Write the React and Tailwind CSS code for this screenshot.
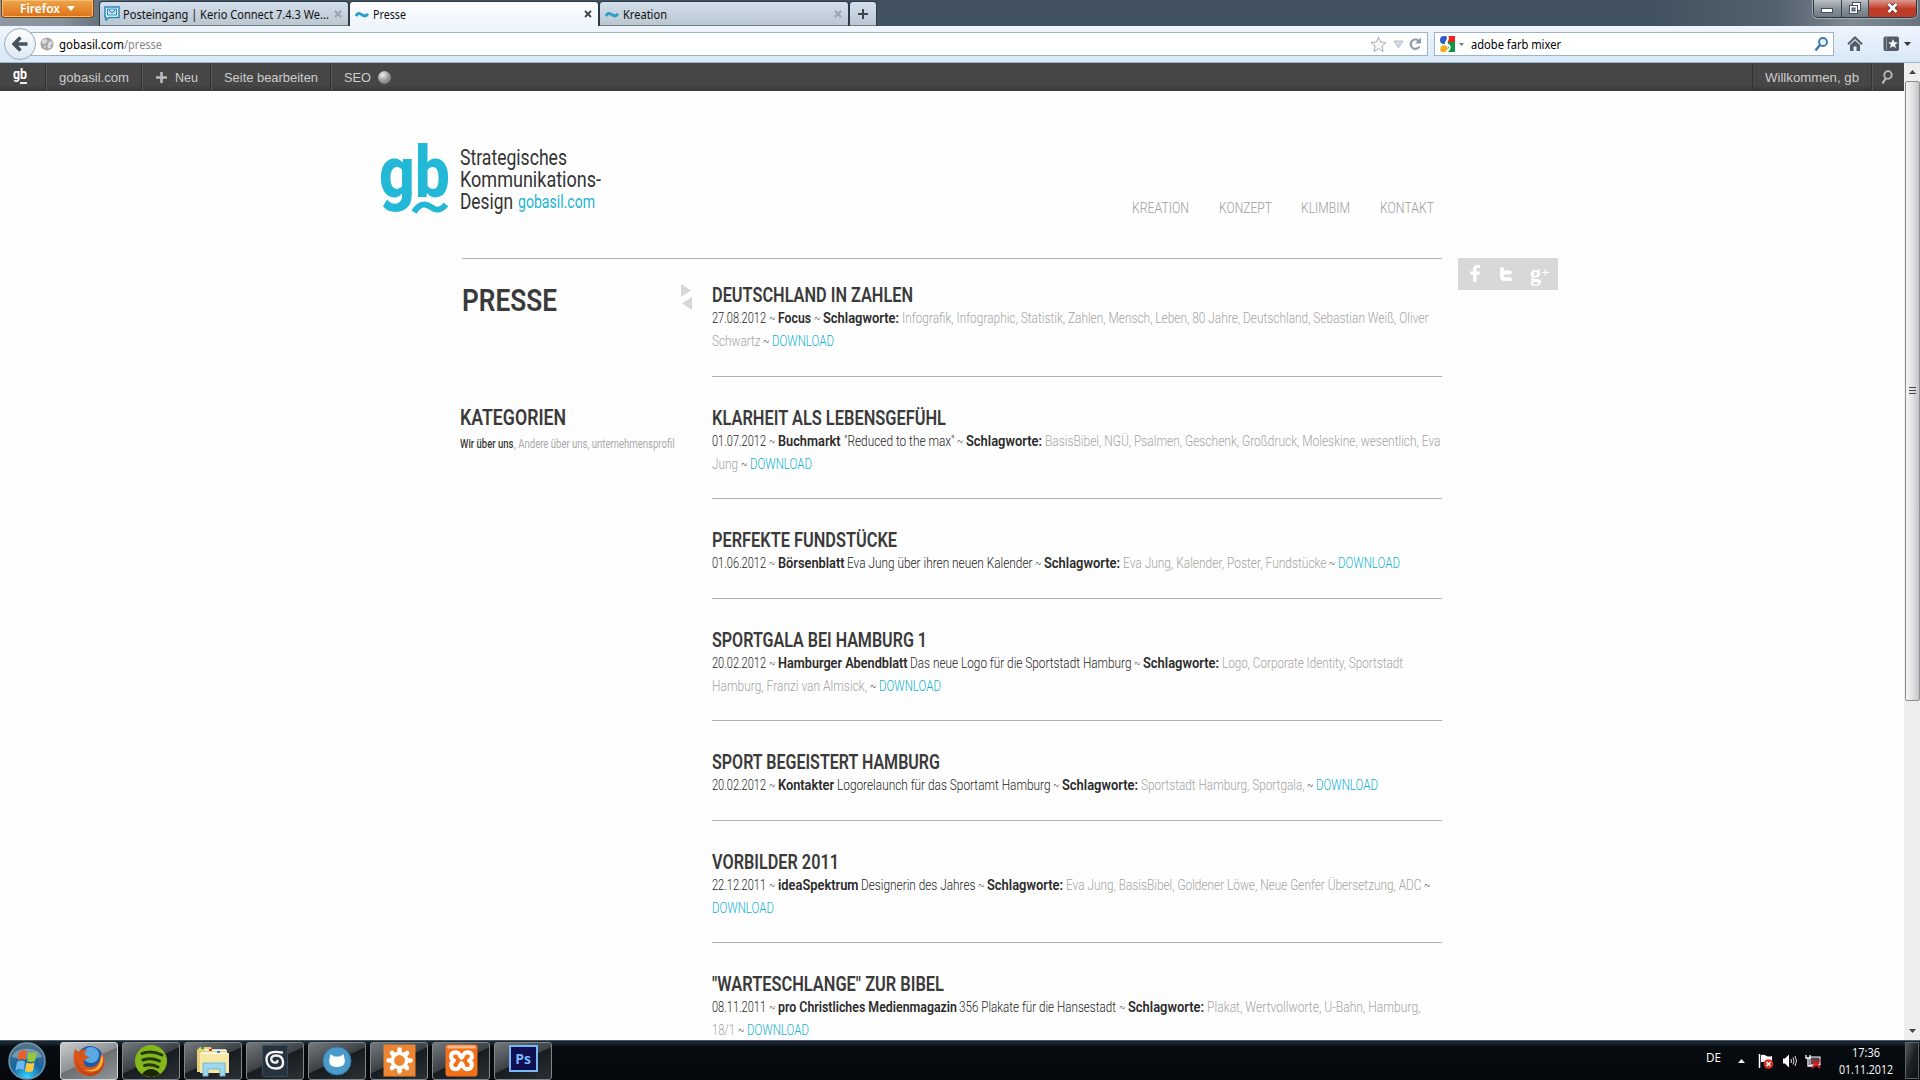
import React, { useLayoutEffect, useRef } from "react";

/* Text set to an exact measure: the glyphs are condensed to fill the width. */
function Fit({ w, className = "", children }) {
  const ref = useRef(null);
  useLayoutEffect(() => {
    const el = ref.current;
    const fit = () => {
      el.style.transform = "none";
      const natural = el.getBoundingClientRect().width;
      if (natural) el.style.transform = `scaleX(${w / natural})`;
    };
    fit();
    document.fonts?.ready.then(fit);
  }, [w]);
  return (
    <span className={`block shrink-0 whitespace-pre ${className}`} style={{ width: w }}>
      <span ref={ref} className="inline-block origin-left whitespace-pre">{children}</span>
    </span>
  );
}

const INK = {
  d: "font-light text-[#222]",
  t: "font-light text-[#555]",
  b: "font-semibold text-[#2b2b2b]",
  g: "font-light text-[#a3a3a3]",
  c: "font-light text-[#0fb0d0]",
};

/* One line of runs: [ink, text, start, end], measured from the line's origin. */
function Line({ runs, origin }) {
  let pos = origin;
  return (
    <div className="flex h-[23px] text-[15px] leading-[23px]">
      {runs.map(([ink, text, start, end], i) => {
        const gap = start - pos;
        pos = end;
        return (
          <span key={i} className="block shrink-0" style={{ marginLeft: gap }}>
            <Fit w={end - start} className={INK[ink]}>{text}</Fit>
          </span>
        );
      })}
    </div>
  );
}

const ITEMS = [
  {
    title: "DEUTSCHLAND IN ZAHLEN", tw: 201, box: "h-[118px] pt-[25px]",
    lines: [
      [["d", "27.08.2012", 712, 766], ["t", "~", 769, 775.5], ["b", "Focus", 778, 811], ["t", "~", 813.5, 820], ["b", "Schlagworte:", 823, 899],
        ["g", "Infografik, Infographic, Statistik, Zahlen, Mensch, Leben, 80 Jahre, Deutschland, Sebastian Weiß, Oliver", 901.5, 1428]],
      [["g", "Schwartz", 712, 760.5], ["t", "~", 763, 769.5], ["c", "DOWNLOAD", 772, 834]],
    ],
  },
  {
    title: "KLARHEIT ALS LEBENSGEFÜHL", tw: 234, box: "h-[122px] pt-[30px]",
    lines: [
      [["d", "01.07.2012", 712, 766], ["t", "~", 769, 775.5], ["b", "Buchmarkt", 778, 840.5], ["d", "\"Reduced to the max\"", 843.5, 954], ["t", "~", 956.5, 963], ["b", "Schlagworte:", 966, 1042],
        ["g", "BasisBibel, NGÜ, Psalmen, Geschenk, Großdruck, Moleskine, wesentlich, Eva", 1045, 1440.5]],
      [["g", "Jung", 712, 738], ["t", "~", 741, 747.5], ["c", "DOWNLOAD", 750, 812]],
    ],
  },
  {
    title: "PERFEKTE FUNDSTÜCKE", tw: 185, box: "h-[100px] pt-[30px]",
    lines: [
      [["d", "01.06.2012", 712, 766], ["t", "~", 769, 775.5], ["b", "Börsenblatt", 778, 844.5], ["d", "Eva Jung über ihren neuen Kalender", 847, 1032.5], ["t", "~", 1035, 1041.5], ["b", "Schlagworte:", 1044, 1120],
        ["g", "Eva Jung, Kalender, Poster, Fundstücke", 1123, 1326.5], ["t", "~", 1329, 1335.5], ["c", "DOWNLOAD", 1338, 1400]],
    ],
  },
  {
    title: "SPORTGALA BEI HAMBURG 1", tw: 215, box: "h-[122px] pt-[30px]",
    lines: [
      [["d", "20.02.2012", 712, 766], ["t", "~", 769, 775.5], ["b", "Hamburger Abendblatt", 778, 907.5], ["d", "Das neue Logo für die Sportstadt Hamburg", 910, 1131.5], ["t", "~", 1134, 1140.5], ["b", "Schlagworte:", 1143, 1219],
        ["g", "Logo, Corporate Identity, Sportstadt", 1222, 1403]],
      [["g", "Hamburg, Franzi van Almsick,", 712, 867], ["t", "~", 869.5, 876], ["c", "DOWNLOAD", 879, 941]],
    ],
  },
  {
    title: "SPORT BEGEISTERT HAMBURG", tw: 228, box: "h-[100px] pt-[30px]",
    lines: [
      [["d", "20.02.2012", 712, 766], ["t", "~", 769, 775.5], ["b", "Kontakter", 778, 834], ["d", "Logorelaunch für das Sportamt Hamburg", 837, 1050.5], ["t", "~", 1053, 1059.5], ["b", "Schlagworte:", 1062, 1138],
        ["g", "Sportstadt Hamburg, Sportgala,", 1141, 1304.5], ["t", "~", 1307, 1313.5], ["c", "DOWNLOAD", 1316, 1378]],
    ],
  },
  {
    title: "VORBILDER 2011", tw: 127, box: "h-[122px] pt-[30px]",
    lines: [
      [["d", "22.12.2011", 712, 766], ["t", "~", 769, 775.5], ["b", "ideaSpektrum", 778, 858.5], ["d", "Designerin des Jahres", 861, 975.5], ["t", "~", 978, 984.5], ["b", "Schlagworte:", 987, 1063],
        ["g", "Eva Jung, BasisBibel, Goldener Löwe, Neue Genfer Übersetzung, ADC", 1065.5, 1421], ["t", "~", 1423.5, 1430]],
      [["c", "DOWNLOAD", 712, 774]],
    ],
  },
  {
    title: "\"WARTESCHLANGE\" ZUR BIBEL", tw: 232, box: "h-[122px] pt-[30px]",
    lines: [
      [["d", "08.11.2011", 712, 766], ["t", "~", 769, 775.5], ["b", "pro Christliches Medienmagazin", 778, 957], ["d", "356 Plakate für die Hansestadt", 959, 1116], ["t", "~", 1118.5, 1125], ["b", "Schlagworte:", 1128, 1204],
        ["g", "Plakat, Wertvollworte, U-Bahn, Hamburg,", 1206.5, 1420]],
      [["g", "18/1", 712, 735], ["t", "~", 737.5, 744], ["c", "DOWNLOAD", 747, 809]],
    ],
  },
];

function Wave() {
  return (
    <svg width="14" height="14" viewBox="0 0 14 14" className="shrink-0">
      <path d="M1 8C2.5 5 4.5 5 7 6.8C9.5 8.5 11.5 8 13 5.8" fill="none" stroke="#2f9fcb" strokeWidth="3" />
    </svg>
  );
}

function CloseX({ color }) {
  return (
    <svg width="8" height="8" viewBox="0 0 8 8" className="shrink-0">
      <path d="M1 1L7 7M7 1L1 7" stroke={color} strokeWidth="1.8" />
    </svg>
  );
}

const TAB = "flex h-[24px] items-center rounded-t-[3px] border-b border-[#6f7d86] bg-linear-to-b from-[#d3dfeb] to-[#bac6d0] shadow-[0_0_0_1px_#2c3946]";

function TitleBar() {
  return (
    <div className="flex h-[26px] items-start bg-[linear-gradient(90deg,#8d98a2_0px,#88929b_60px,#566573_115px,#42515f_200px,#42515f_1650px,#54626f_1780px,#7f8a93_1850px,#67747f_1920px)]">
      <div className="ml-px flex h-[18px] w-[93px] items-center rounded-b-[4px] border border-t-0 border-[#7d4412] bg-linear-to-b from-[#eda548] to-[#db7114] pl-[18px] shadow-[inset_0_0_0_1px_#f5bd77]">
        <Fit w={40} className="text-[12px] leading-[16px] font-semibold text-white">Firefox</Fit>
        <svg width="8" height="5" viewBox="0 0 8 5" className="ml-[7px]"><path d="M0 0H8L4 5Z" fill="#fff" /></svg>
      </div>
      <div className="mt-[2px] ml-[6px] flex gap-[2px] text-[12px] leading-[20px] text-[#111]">
        <div className={`${TAB} w-[248px] pl-[4px]`}>
          <svg width="16" height="15" viewBox="0 0 16 15" className="shrink-0">
            <path d="M1 1H15V11.500H5L2 14V11.500H1Z" fill="#fff" stroke="#2588bd" strokeWidth="1.500" />
            <rect x="3.500" y="3" width="9" height="6" fill="#bfe4f5" stroke="#2588bd" />
            <path d="M5 4L8 7L11 4" fill="none" stroke="#1571a8" />
          </svg>
          <Fit w={206} className="mt-[2px] ml-[3px]">Posteingang | Kerio Connect 7.4.3 We...</Fit>
          <div className="ml-[5px]"><CloseX color="#98a2aa" /></div>
        </div>
        <div className="flex h-[24px] w-[248px] items-center rounded-t-[3px] bg-linear-to-b from-[#fdfeff] to-[#eff5fc] pl-[5px] shadow-[0_0_0_1px_#2c3946] [clip-path:inset(-1px_-1px_0_-1px)]">
          <div className="mt-[2px]"><Wave /></div>
          <Fit w={33} className="mt-[2px] ml-[4px]">Presse</Fit>
          <div className="mr-[6px] ml-auto"><CloseX color="#3f474d" /></div>
        </div>
        <div className={`${TAB} w-[248px] pl-[5px]`}>
          <div className="mt-[2px]"><Wave /></div>
          <Fit w={44} className="mt-[2px] ml-[4px]">Kreation</Fit>
          <div className="mr-[6px] ml-auto"><CloseX color="#98a2aa" /></div>
        </div>
        <div className={`${TAB} w-[26px] justify-center`}>
          <svg width="10" height="10" viewBox="0 0 10 10"><path d="M5 0V10M0 5H10" stroke="#3d464e" strokeWidth="2" /></svg>
        </div>
      </div>
      <div className="mr-[3px] ml-auto flex h-[18px] w-[104px] overflow-hidden rounded-b-[5px] border border-t-0 border-[#2c343b] shadow-[0_0_0_1px_#a3adb4]">
        <div className="flex w-[28px] items-center justify-center border-r border-[#3a444d] bg-linear-to-b from-[#b9c0c6] via-[#8b949b] via-50% to-[#6f7a82]">
          <svg width="13" height="6" viewBox="0 0 13 6" className="mt-[5px]"><rect x=".5" y=".5" width="11" height="4" fill="#fff" stroke="#434c60" /></svg>
        </div>
        <div className="flex w-[27px] items-center justify-center border-r border-[#3a444d] bg-linear-to-b from-[#b9c0c6] via-[#8b949b] via-50% to-[#6f7a82]">
          <svg width="12" height="12" viewBox="0 0 12 12" className="-mt-px">
            <rect x="3.500" y=".5" width="8" height="8" fill="#fff" stroke="#434c60" />
            <rect x=".5" y="3.500" width="8" height="8" fill="#fff" stroke="#434c60" />
            <rect x="3" y="6" width="3" height="3" fill="#8b949b" stroke="#434c60" />
          </svg>
        </div>
        <div className="flex flex-1 items-center justify-center bg-linear-to-b from-[#d99a8f] via-[#c13c26] via-50% to-[#b8402b]">
          <svg width="13" height="12" viewBox="0 0 13 12" className="-mt-px">
            <path d="M2.500 2L10.500 10M10.500 2L2.500 10" stroke="#5a3a44" strokeWidth="4.400" />
            <path d="M2.500 2L10.500 10M10.500 2L2.500 10" stroke="#fff" strokeWidth="2.600" />
          </svg>
        </div>
      </div>
    </div>
  );
}

function Toolbar() {
  return (
    <div className="flex h-[37px] items-center border-b border-[#9db5cd] bg-linear-to-b from-[#eff5fc] to-[#d8e8f7] text-[12px] leading-[20px]">
      <div className="z-10 ml-[4px] flex h-[32px] w-[32px] shrink-0 items-center justify-center rounded-full border border-[#93a8bd] bg-linear-to-b from-[#fdfeff] to-[#dde8f4]">
        <svg width="16" height="16" viewBox="0 0 16 16"><path d="M8.500 1.500L2 8L8.500 14.500M2.500 8H15.500" fill="none" stroke="#47535f" strokeWidth="3.400" /></svg>
      </div>
      <div className="-ml-[6px] flex h-[24px] w-[1398px] items-center border border-[#9fb3c8] bg-white pl-[9px]">
        <svg width="14" height="14" viewBox="0 0 15 15" className="shrink-0">
          <circle cx="7.500" cy="7.500" r="7" fill="#a8a8a8" />
          <path d="M2 4L6 2L8 4L6 7L3 7.500ZM9 6L12 4L13.500 7L11 9L12 11L9 12.500L8 9ZM4 9L6.500 10L5.500 12.500Z" fill="#dedede" />
        </svg>
        <Fit w={65} className="mt-[2px] ml-[5px] text-black">gobasil.com</Fit>
        <Fit w={38} className="mt-[2px] text-[#888]">/presse</Fit>
        <div className="mr-[5px] ml-auto flex items-center">
          <svg width="17" height="17" viewBox="0 0 17 17"><path d="M8.500 1L10.700 6L16 6.500L12 10L13.200 15.500L8.500 12.600L3.800 15.500L5 10L1 6.500L6.300 6Z" fill="#f7f7f7" stroke="#aaa" /></svg>
          <svg width="11" height="9" viewBox="0 0 11 9" className="ml-[6px]"><path d="M1 1H10L5.500 8Z" fill="#d5dbe2" stroke="#b6bec7" /></svg>
          <svg width="13" height="14" viewBox="0 0 13 14" className="ml-[5px]"><path d="M10.500 9.500A4.700 4.700 0 1 1 9.700 3.800" fill="none" stroke="#8e9cab" strokeWidth="2.200" /><path d="M12 .5V6.500H6Z" fill="#8e9cab" /></svg>
        </div>
      </div>
      <div className="ml-[6px] flex h-[24px] w-[400px] items-center border border-[#9fb3c8] bg-white pl-[4px]">
        <svg width="16" height="16" viewBox="0 0 16 16" className="shrink-0">
          <rect width="16" height="16" fill="#fff" />
          <rect x="7" width="9" height="6" fill="#e8261d" /><rect x="9" y="6" width="7" height="10" fill="#119646" />
          <circle cx="5" cy="4" r="4" fill="#2a5cc4" /><circle cx="5" cy="13" r="3.800" fill="#f2b01e" />
          <path d="M8 0C12 4 3 7 9 9C13 11 9 15 7 16" fill="none" stroke="#fff" strokeWidth="2" />
        </svg>
        <svg width="5" height="3" viewBox="0 0 5 3" className="ml-[4px]"><path d="M0 0H5L2.500 3Z" fill="#777" /></svg>
        <Fit w={90} className="mt-[2px] ml-[7px] text-black">adobe farb mixer</Fit>
        <svg width="14" height="15" viewBox="0 0 14 15" className="mr-[5px] ml-auto"><circle cx="9" cy="5" r="4" fill="#e9f3fb" stroke="#3b76b4" strokeWidth="1.800" /><path d="M6 8L1.500 13.500" stroke="#3b76b4" strokeWidth="2.400" /></svg>
      </div>
      <svg width="16" height="16" viewBox="0 0 16 16" className="ml-[13px]"><path d="M1 8.200L8 1.500L15 8.200" fill="none" stroke="#515c67" strokeWidth="2" /><path d="M3 9L8 4.500L13 9V15H9.500V10.500H6.500V15H3Z" fill="#515c67" /></svg>
      <svg width="17" height="16" viewBox="0 0 17 16" className="ml-[20px]"><rect x=".5" y=".5" width="15.500" height="14.500" rx="2" fill="#515c67" /><path d="M3.500 1V14" stroke="#8c959d" /><path d="M10 3L11.300 6.300L14.800 6.500L12 8.700L13 12L10 10.200L7 12L8 8.700L5.200 6.500L8.700 6.300Z" fill="#fff" /></svg>
      <svg width="7" height="4" viewBox="0 0 7 4" className="ml-[4px]"><path d="M0 0H7L3.500 4Z" fill="#333" /></svg>
    </div>
  );
}

const CELL = "flex h-full items-center border-r border-[#333] shadow-[1px_0_0_#555]";

function AdminBar() {
  return (
    <div className="flex h-[28px] items-center bg-linear-to-b from-[#464646] from-80% to-[#373737] font-['Liberation_Sans',sans-serif] text-[13px] leading-[28px] text-[#ccc]">
      <div className={`${CELL} w-[46px] pl-[13px]`}>
        <div className="flex flex-col items-end">
          <Fit w={14} className="-mt-px h-[13px] font-[Roboto,sans-serif] text-[14.500px] leading-[11px] font-bold text-white">gb</Fit>
          <i className="h-[2px] w-[7px] bg-[#e8e8e8]" />
        </div>
      </div>
      <div className={`${CELL} w-[96px] pl-[13px]`}><Fit w={70} className="mt-px">gobasil.com</Fit></div>
      <div className={`${CELL} w-[69px] pl-[14px]`}>
        <svg width="11" height="11" viewBox="0 0 11 11"><path d="M5.500 0V11M0 5.500H11" stroke="#bbb" strokeWidth="2.600" /></svg>
        <Fit w={23} className="mt-px ml-[8px]">Neu</Fit>
      </div>
      <div className={`${CELL} w-[120px] pl-[13px]`}><Fit w={94} className="mt-px">Seite bearbeiten</Fit></div>
      <div className="flex items-center pl-[13px]">
        <Fit w={27} className="mt-px">SEO</Fit>
        <div className="ml-[7px] h-[13px] w-[13px] rounded-full bg-[radial-gradient(circle_at_35%_30%,#eee,#999_50%,#666)]" />
      </div>
      <div className={`${CELL} ml-auto w-[120px] border-l pl-[12px]`}><Fit w={94} className="mt-px">Willkommen, gb</Fit></div>
      <div className="flex w-[32px] items-center pl-[9px]">
        <svg width="12" height="15" viewBox="0 0 12 15"><circle cx="7" cy="5" r="3.800" fill="none" stroke="#bbb" strokeWidth="1.800" /><path d="M5 8L1.500 13.500" stroke="#bbb" strokeWidth="2.200" /></svg>
      </div>
    </div>
  );
}

function Header() {
  return (
    <header className="flex h-[167px]">
      <div className="relative ml-[379px] h-[130px] w-[71px]">
        <Fit w={71} className="pt-[46px] text-[72px] leading-[72px] font-extrabold text-[#22b8d6]">gb</Fit>
        <svg width="36" height="16" viewBox="0 0 36 16" className="absolute top-[109px] left-[33px]">
          <path d="M2 12C8 3 13 3 19 7C25 11.500 29 10.500 34 4.500" fill="none" stroke="#22b8d6" strokeWidth="6" />
        </svg>
      </div>
      <div className="ml-[10px] w-[146px] pt-[56px] text-[21.500px] leading-[22px] text-[#333]">
        <Fit w={107}>Strategisches</Fit>
        <Fit w={141}>Kommunikations-</Fit>
        <div className="flex">
          <Fit w={53}>Design</Fit>
          <Fit w={77} className="ml-[5px] text-[17.500px] text-[#22b4d2]">gobasil.com</Fit>
        </div>
      </div>
      <nav className="ml-[526px] flex pt-[105px] text-[15px] leading-[24px] font-light text-[#9c9c9c]">
        <Fit w={57}>KREATION</Fit>
        <Fit w={53} className="ml-[30px]">KONZEPT</Fit>
        <Fit w={49} className="ml-[29px]">KLIMBIM</Fit>
        <Fit w={54} className="ml-[30px]">KONTAKT</Fit>
      </nav>
    </header>
  );
}

function Page() {
  return (
    <div className="h-[949px] w-[1904px] overflow-hidden bg-[#fefefe] font-[Roboto,sans-serif]">
      <Header />
      <div className="ml-[462px] flex">
        <div className="flex w-[980px] border-t border-[#b0b0b0]">
          <aside className="-ml-[2px] w-[220px] text-[#3a3a3a]">
            <Fit w={95} className="mt-[24px] ml-[2px] text-[31px] leading-[36px] font-semibold">PRESSE</Fit>
            <Fit w={106} className="mt-[86px] text-[22px] leading-[26px] font-semibold">KATEGORIEN</Fit>
            <div className="mt-[4px] flex text-[12px] leading-[18px]">
              <Fit w={53.500} className="font-medium">Wir über uns</Fit>
              <Fit w={160.500} className="text-[#a9a9a9]">, Andere über uns, unternehmensprofil</Fit>
            </div>
          </aside>
          <svg width="12" height="27" viewBox="0 0 12 27" className="mt-[25px] ml-px"><path d="M0 0L10 6.500L0 13Z" fill="#d6d6d6" /><path d="M11 13L1 19.500L11 26Z" fill="#d6d6d6" /></svg>
          <main className="ml-[19px] w-[730px]">
            {ITEMS.map((it) => (
              <article key={it.title} className={`border-b border-[#b0b0b0] ${it.box}`}>
                <Fit w={it.tw} className="h-[23px] text-[19.500px] leading-[24px] font-semibold text-[#3a3a3a]">{it.title}</Fit>
                {it.lines.map((runs, i) => <Line key={i} runs={runs} origin={712} />)}
              </article>
            ))}
          </main>
        </div>
        <div className="ml-[16px] flex h-[32px] w-[100px] items-center bg-[#d8d8d8]">
          <svg width="10" height="17" viewBox="0 0 10 17" className="-mt-px ml-[12px]"><path d="M3 17V9.500H0V6.500H3V4.500C3 1.500 4.500 0 7 0H10V3H8C7 3 6.500 3.500 6.500 4.500V6.500H10L9.500 9.500H6.500V17Z" fill="#fff" /></svg>
          <svg width="12" height="14" viewBox="0 0 12 14" className="ml-[20px]"><path d="M2 2V9C2 11 3 12.200 5 12.200H10M2 5.500H10" fill="none" stroke="#fff" strokeWidth="3.800" strokeLinecap="round" /></svg>
          <div className="ml-[18px] flex font-['Liberation_Serif',serif] font-semibold text-white">
            <Fit w={11} className="text-[23px] leading-[24px]">g</Fit>
            <span className="text-[15px] leading-[20px]">+</span>
          </div>
        </div>
      </div>
    </div>
  );
}

function Scrollbar() {
  return (
    <div className="flex h-[977px] w-[16px] flex-col items-center bg-[#eeeeee]">
      <svg width="7" height="4" viewBox="0 0 7 4" className="mt-[7px]"><path d="M0 4H7L3.500 0Z" fill="#444" /></svg>
      <div className="mt-[7px] flex h-[620px] w-[15px] justify-center rounded-[2px] border border-[#8f9093] bg-linear-to-r from-[#f4f4f4] via-[#e3e3e5] via-50% to-[#c4c4c8]">
        <div className="mt-[305px] flex flex-col gap-[2px]">
          <i className="h-[1px] w-[7px] bg-[#444]" /><i className="h-[1px] w-[7px] bg-[#444]" /><i className="h-[1px] w-[7px] bg-[#444]" />
        </div>
      </div>
      <svg width="7" height="4" viewBox="0 0 7 4" className="mt-auto mb-[7px]"><path d="M0 0H7L3.500 4Z" fill="#444" /></svg>
    </div>
  );
}

const ICONS = [
  <svg key="firefox" width="34" height="34" viewBox="0 0 34 34">
    <circle cx="18" cy="15" r="13" fill="#1d5aa8" />
    <circle cx="19" cy="11" r="8" fill="#5aa9e2" />
    <path d="M3 5L6.500 8C9 5.500 12 5 15.500 6C12.500 7.500 12 9.500 13 11L17 13C16.500 15 13 14.500 12 17C11 21 15 24 19 23C24 22.500 28.500 18 28.500 12C31 14 31 10 30 8C34 14 33.500 22 28 28C21 34 10 33 5 26C1 20 1 11 3 5Z" fill="#d9541a" />
    <path d="M5 15C6 24 12 29 19 29C26 28.500 31 22 31.500 15C34 24 27 32 18 32C9 31.500 3 24 5 15Z" fill="#b83a12" opacity=".6" />
    <path d="M29.500 9.500C32.500 15 31 22 26.500 25.500C22 28 17 28 13 25.500C20 27 25.500 24.500 27.500 19C28.500 16 29.500 13 29.500 9.500Z" fill="#f6b338" />
  </svg>,
  <svg key="spotify" width="34" height="34" viewBox="0 0 34 34">
    <circle cx="17" cy="17" r="16" fill="#84b71a" />
    <path d="M8 9.500Q18 6 28 11M9 16Q17 13 25.500 17M10.500 21.500Q17 19.500 24 23" fill="none" stroke="#27370c" strokeWidth="3" strokeLinecap="round" />
    <path d="M8 30Q12 25 17 25Q22 25 26 30Q17 36 8 30Z" fill="#1b2607" />
  </svg>,
  <svg key="explorer" width="34" height="34" viewBox="0 0 34 34">
    <path d="M1 6L4 3H15L16 6H31V28H1Z" fill="#e8cf7a" /><path d="M4 9H33V29H4Z" fill="#f7e8a6" />
    <path d="M9 6H30M5 9H31" stroke="#fff" strokeWidth="1.500" />
    <rect x="5" y="3" width="3" height="2" fill="#30a030" /><rect x="13" y="5" width="3" height="2" fill="#d23b20" /><rect x="21" y="7" width="3" height="2" fill="#2a80d8" />
    <path d="M7 19H29V32H24V25H12V32H7Z" fill="#9fd8ee" stroke="#6fb6d6" />
  </svg>,
  <svg key="max" width="26" height="34" viewBox="0 0 26 34">
    <rect x=".5" y="1.500" width="25" height="31" rx="1" fill="#26333f" stroke="#3d4b58" />
    <path d="M20 8.500C10 6.500 4 9 4.500 16C5 22.500 9 24.500 14 24.500C19.500 24.500 21.500 22 21 17.500C20.500 13 18 11.500 14 11.500C10 11.500 8.500 14 9.500 16.500C10.500 19 15.500 19.500 15.500 17" fill="none" stroke="#f4f4f4" strokeWidth="2.400" strokeLinecap="round" />
  </svg>,
  <svg key="github" width="30" height="30" viewBox="0 0 30 30">
    <circle cx="15" cy="15" r="14" fill="#4a9aca" stroke="#2f78a8" />
    <path d="M8.500 8L12 10.500H18L21.500 8L22.500 12.500C24 19 20 21 15 21C10 21 6 19 7.500 12.500Z" fill="#fff" />
  </svg>,
  <svg key="gear" width="33" height="33" viewBox="0 0 33 33">
    <rect x=".5" y=".5" width="32" height="32" fill="#ec8632" />
    <g stroke="#fff" strokeWidth="4.600" strokeLinecap="round"><path d="M16.500 5.500V27.500M5.500 16.500H27.500M9 9L24 24M24 9L9 24" /></g>
    <circle cx="16.500" cy="16.500" r="9" fill="#fff" /><circle cx="16.500" cy="16.500" r="5.400" fill="#ec8632" />
  </svg>,
  <svg key="xampp" width="33" height="33" viewBox="0 0 33 33">
    <rect x=".5" y=".5" width="32" height="32" rx="3" fill="#f3701a" /><rect x="2" y="1.500" width="29" height="3" rx="1.500" fill="#f9b98c" />
    <path d="M12 8.500C5 7.500 4.500 14.500 9 16.500C4.500 19 5.500 26 12 25C15 24.500 15.500 19 16.500 19C17.500 19 18 24.500 21 25C27.500 26 28.500 19 24 16.500C28.500 14.500 28 7.500 21 8.500C18 9 17.500 14 16.500 14C15.500 14 15 9 12 8.500Z" fill="none" stroke="#fff" strokeWidth="4" strokeLinejoin="round" />
  </svg>,
  <div key="ps" className="-mt-[4px] flex h-[27px] w-[29px] items-center justify-center border-2 border-[#78b8f8] bg-[#100f52] font-['Open_Sans',sans-serif] text-[14px] leading-none font-bold text-[#78b8f8]">Ps</div>,
];

function Taskbar() {
  return (
    <div className="flex h-[40px] items-center border-t border-[#4a5a66] bg-linear-to-b from-[#1c2733] from-5% via-[#070c11] via-15% to-[#05080b]">
      <svg width="38" height="38" viewBox="0 0 38 38" className="mr-[14px] ml-[8px]">
        <defs>
          <radialGradient id="orb" cx=".5" cy=".95" r=".9"><stop offset="0" stopColor="#37d2fb" /><stop offset=".5" stopColor="#1766a3" /><stop offset="1" stopColor="#537386" /></radialGradient>
        </defs>
        <circle cx="19" cy="19" r="18" fill="url(#orb)" stroke="#6f96ac" strokeWidth="1.500" />
        <path d="M4 15C7 4 31 4 34 15C26 17 12 17 4 15Z" fill="#fff" opacity=".3" />
        <path d="M11 10Q15 7 19 9L17.500 18Q13.500 16 9.500 18.500Z" fill="#e8602c" />
        <path d="M20.500 10Q24.500 12 29 10L27 19Q23 21 19 19Z" fill="#93c83d" />
        <path d="M9 20Q13 17.500 17 19.500L15.500 28Q11.500 26 7.500 28.500Z" fill="#6fb7ea" />
        <path d="M18.500 20.500Q22.500 22.500 26.500 20.500L25 29Q21 31 17 29Z" fill="#fbc73d" />
      </svg>
      <div className="flex gap-[4px]">
        {ICONS.map((icon, i) => (
          <div
            key={i}
            className={`flex h-[38px] w-[58px] items-center justify-center rounded-[3px] border ${i === 0
              ? "border-[#d3d6d8] bg-[linear-gradient(155deg,#c9cbcd_0%,#8f9294_48%,#6d7072_50%,#929597_100%)]"
              : "border-[#7f8589] bg-[linear-gradient(155deg,#74797d_0%,#3b4145_48%,#171c20_50%,#2a3035_100%)]"}`}
          >
            {icon}
          </div>
        ))}
      </div>
      <div className="ml-auto flex h-full items-center font-['Open_Sans',sans-serif] text-[12px] leading-[17px] text-white">
        <Fit w={15} className="-mt-[7px]">DE</Fit>
        <svg width="7" height="4" viewBox="0 0 7 4" className="ml-[17px]"><path d="M0 4H7L3.500 0Z" fill="#eee" /></svg>
        <svg width="16" height="16" viewBox="0 0 16 16" className="ml-[13px]"><path d="M1.500 1V15" stroke="#fff" strokeWidth="1.500" /><path d="M3 2Q6 1 8.500 3Q11 4 14 3V9H3Z" fill="#fff" /><circle cx="10.500" cy="11" r="4.800" fill="#d63028" /><path d="M8.500 9L12.500 13M12.500 9L8.500 13" stroke="#fff" strokeWidth="1.400" /></svg>
        <svg width="16" height="16" viewBox="0 0 16 16" className="ml-[8px]"><path d="M1 5.500H3L7 1.500V14.500L3 10.500H1Z" fill="#fff" /><path d="M9 6Q10 8 9 10M11 4.500Q13 8 11 11.500M13 3Q16 8 13 13" fill="none" stroke="#ddd" /></svg>
        <svg width="17" height="16" viewBox="0 0 17 16" className="ml-[7px]"><rect x="5" y="4" width="10" height="8" fill="#444b52" stroke="#fff" /><path d="M1 2V5H5V2M3 5V13H8" fill="none" stroke="#fff" strokeWidth="1.300" /><path d="M7 7L15 15M15 7L7 15" stroke="#e01818" strokeWidth="2" /></svg>
        <div className="ml-[17px] flex w-[54px] flex-col items-center">
          <Fit w={28}>17:36</Fit>
          <Fit w={54}>01.11.2012</Fit>
        </div>
        <div className="ml-[12px] h-[37px] w-[14px] border border-[#5a6064] bg-linear-to-br from-[#54595d] via-[#1c2124] via-50% to-[#0d1114]" />
        <div className="w-px" />
      </div>
    </div>
  );
}

export default function App() {
  return (
    <div className="flex h-[1080px] w-[1920px] flex-col overflow-hidden bg-[#fefefe] font-['Noto_Sans',sans-serif]">
      <TitleBar />
      <Toolbar />
      <div className="flex">
        <div className="w-[1904px]">
          <AdminBar />
          <Page />
        </div>
        <Scrollbar />
      </div>
      <Taskbar />
    </div>
  );
}
